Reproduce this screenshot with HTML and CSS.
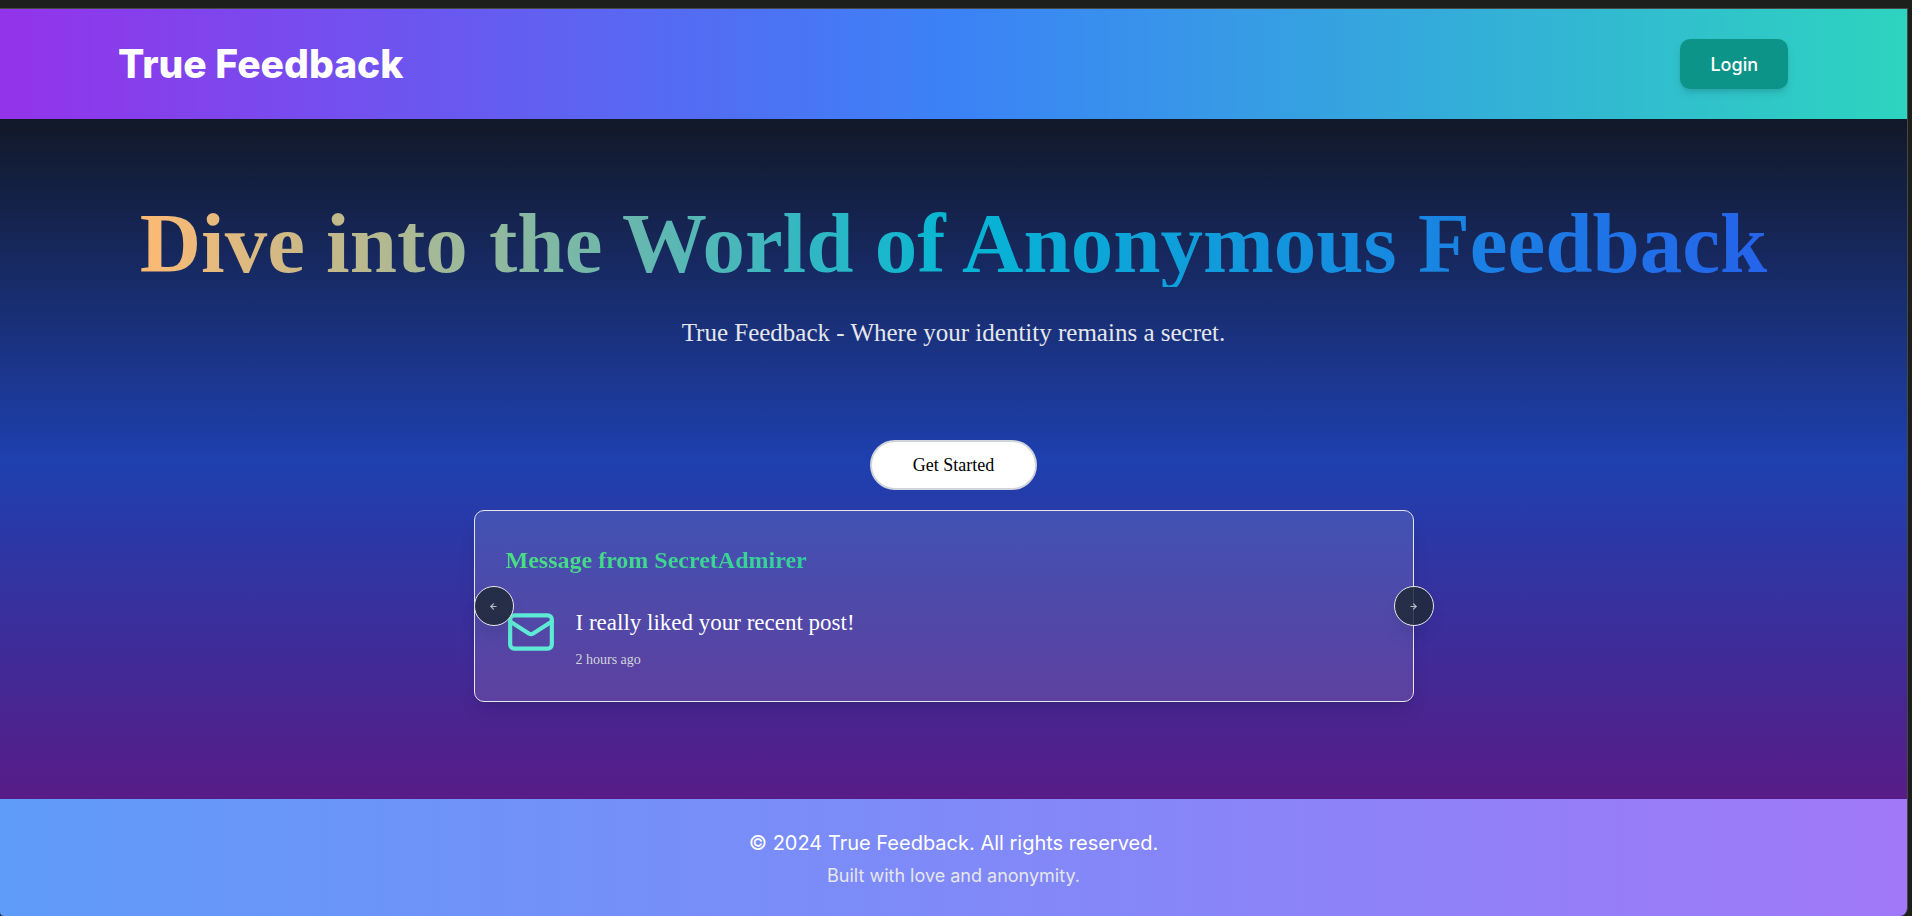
FILE: index.html
```html
<!DOCTYPE html>
<html lang="en">
<head>
<meta charset="utf-8">
<title>True Feedback</title>
<link rel="stylesheet" href="styles.css">
</head>
<body>
<div class="page">
  <header class="navbar">
    <a class="brand" href="#">True Feedback</a>
    <button class="login" type="button">Login</button>
  </header>
  <main class="hero">
    <section class="intro">
      <h1 class="headline">Dive into the World of Anonymous Feedback</h1>
      <p class="tagline">True Feedback - Where your identity remains a secret.</p>
    </section>
    <button class="start" type="button">Get Started</button>
    <section class="carousel" aria-label="Messages">
      <article class="card">
        <h2 class="card-title">Message from SecretAdmirer</h2>
        <div class="message">
          <svg class="mail" viewBox="0 0 24 24" fill="none" stroke="currentColor" stroke-width="2" stroke-linecap="round" stroke-linejoin="round" aria-hidden="true"><rect width="20" height="16" x="2" y="4" rx="2"/><path d="m22 7-8.97 5.7a1.94 1.94 0 0 1-2.06 0L2 7"/></svg>
          <div class="message-body">
            <p class="message-text">I really liked your recent post!</p>
            <p class="message-time">2 hours ago</p>
          </div>
        </div>
      </article>
      <button class="arrow arrow-prev" type="button" aria-label="Previous slide">
        <svg class="arrow-icon" viewBox="0 0 24 24" fill="none" stroke="currentColor" stroke-width="3" stroke-linecap="round" stroke-linejoin="round" aria-hidden="true"><path d="m12 19-7-7 7-7"/><path d="M19 12H5"/></svg>
      </button>
      <button class="arrow arrow-next" type="button" aria-label="Next slide">
        <svg class="arrow-icon" viewBox="0 0 24 24" fill="none" stroke="currentColor" stroke-width="3" stroke-linecap="round" stroke-linejoin="round" aria-hidden="true"><path d="M5 12h14"/><path d="m12 5 7 7-7 7"/></svg>
      </button>
    </section>
  </main>
  <footer class="footer">
    <p class="copyright">© 2024 True Feedback. All rights reserved.</p>
    <p class="credit">Built with love and anonymity.</p>
  </footer>
</div>
</body>
</html>
```
FILE: styles.css
```css
* {
  box-sizing: border-box;
  margin: 0;
}

body {
  min-height: 100vh;
  display: flex;
  padding: 8px 4px 0 0;
  background: #1d1f1d;
  font-family: "Liberation Serif", serif;
}

button {
  font-family: inherit;
  cursor: pointer;
}

.page {
  flex: 1;
  display: flex;
  flex-direction: column;
  border-top: 1px solid #464846;
  border-right: 1px solid #464846;
  border-radius: 0 0 8px 4px;
  overflow: hidden;
}

.navbar {
  display: flex;
  align-items: center;
  justify-content: space-between;
  padding: 30px 119px 30px 118px;
  background: linear-gradient(to right, #9333ea, #3b82f6, #2dd4bf);
  font-family: Inter, sans-serif;
}

.brand {
  color: #fff;
  font-size: 39px;
  line-height: 50px;
  font-weight: 800;
  text-decoration: none;
}

.login {
  height: 50px;
  padding: 0 30px;
  border: 0;
  border-radius: 10px;
  background: #0d9488;
  box-shadow: 0 5px 8px -1px rgba(0, 0, 0, 0.1), 0 3px 5px -2px rgba(0, 0, 0, 0.1);
  color: #fff;
  font-size: 18px;
  font-weight: 500;
}

.hero {
  flex: 1;
  display: flex;
  flex-direction: column;
  align-items: center;
  padding: 80px 20px 94px;
  background: linear-gradient(to bottom, #111827, #1e40af, #581c87);
}

.intro {
  margin-bottom: 90px;
  text-align: center;
}

.headline {
  background: linear-gradient(to right, #fdba74, #06b6d4, #2563eb);
  background-clip: text;
  -webkit-background-clip: text;
  color: transparent;
  font-size: 85px;
  line-height: 88px;
  font-weight: 700;
}

.tagline {
  margin-top: 28px;
  color: #e5e7eb;
  font-size: 25px;
  line-height: 35px;
}

.start {
  height: 50px;
  margin-bottom: 20px;
  padding: 0 41px;
  border: 2px solid #d1d5db;
  border-radius: 25px;
  background: #fff;
  color: #000;
  font-size: 18px;
  font-weight: 500;
}

.carousel {
  position: relative;
  width: 100%;
  max-width: 960px;
  padding-right: 20px;
}

.card {
  padding: 31px;
  border: 1px solid #e5e7eb;
  border-radius: 10px;
  background: rgba(255, 255, 255, 0.12);
  box-shadow: 0 12px 19px -4px rgba(0, 0, 0, 0.1), 0 5px 8px -5px rgba(0, 0, 0, 0.1);
}

.card-title {
  background: linear-gradient(to right, #4ade80, #06b6d4);
  background-clip: text;
  -webkit-background-clip: text;
  color: transparent;
  font-size: 24px;
  line-height: 36px;
  font-weight: 700;
}

.message {
  display: flex;
  gap: 20px;
  margin-top: 29px;
}

.mail {
  width: 50px;
  height: 50px;
  color: #5eead4;
}

.message-text {
  color: #fff;
  font-size: 23px;
  line-height: 32px;
}

.message-time {
  margin-top: 11px;
  color: #d1d5db;
  font-size: 14px;
  line-height: 20px;
}

.arrow {
  position: absolute;
  top: 50%;
  display: grid;
  place-items: center;
  width: 40px;
  height: 40px;
  padding: 0;
  border: 1px solid #e5e7eb;
  border-radius: 50%;
  background: rgba(31, 41, 55, 0.85);
  box-shadow: 0 12px 19px -4px rgba(0, 0, 0, 0.1);
  color: #b6bcc8;
  transform: translateY(-50%);
}

.arrow-prev {
  left: 0;
}

.arrow-next {
  right: 0;
}

.arrow-icon {
  width: 9px;
  height: 9px;
}

.footer {
  padding: 29px 20px 28px;
  background: linear-gradient(to right, #5f9bf8, #a078f8);
  font-family: Inter, sans-serif;
  text-align: center;
}

.copyright {
  color: #fff;
  font-size: 20px;
  line-height: 30px;
}

.credit {
  margin-top: 5px;
  color: #e5e7eb;
  font-size: 18px;
  line-height: 25px;
}
```
